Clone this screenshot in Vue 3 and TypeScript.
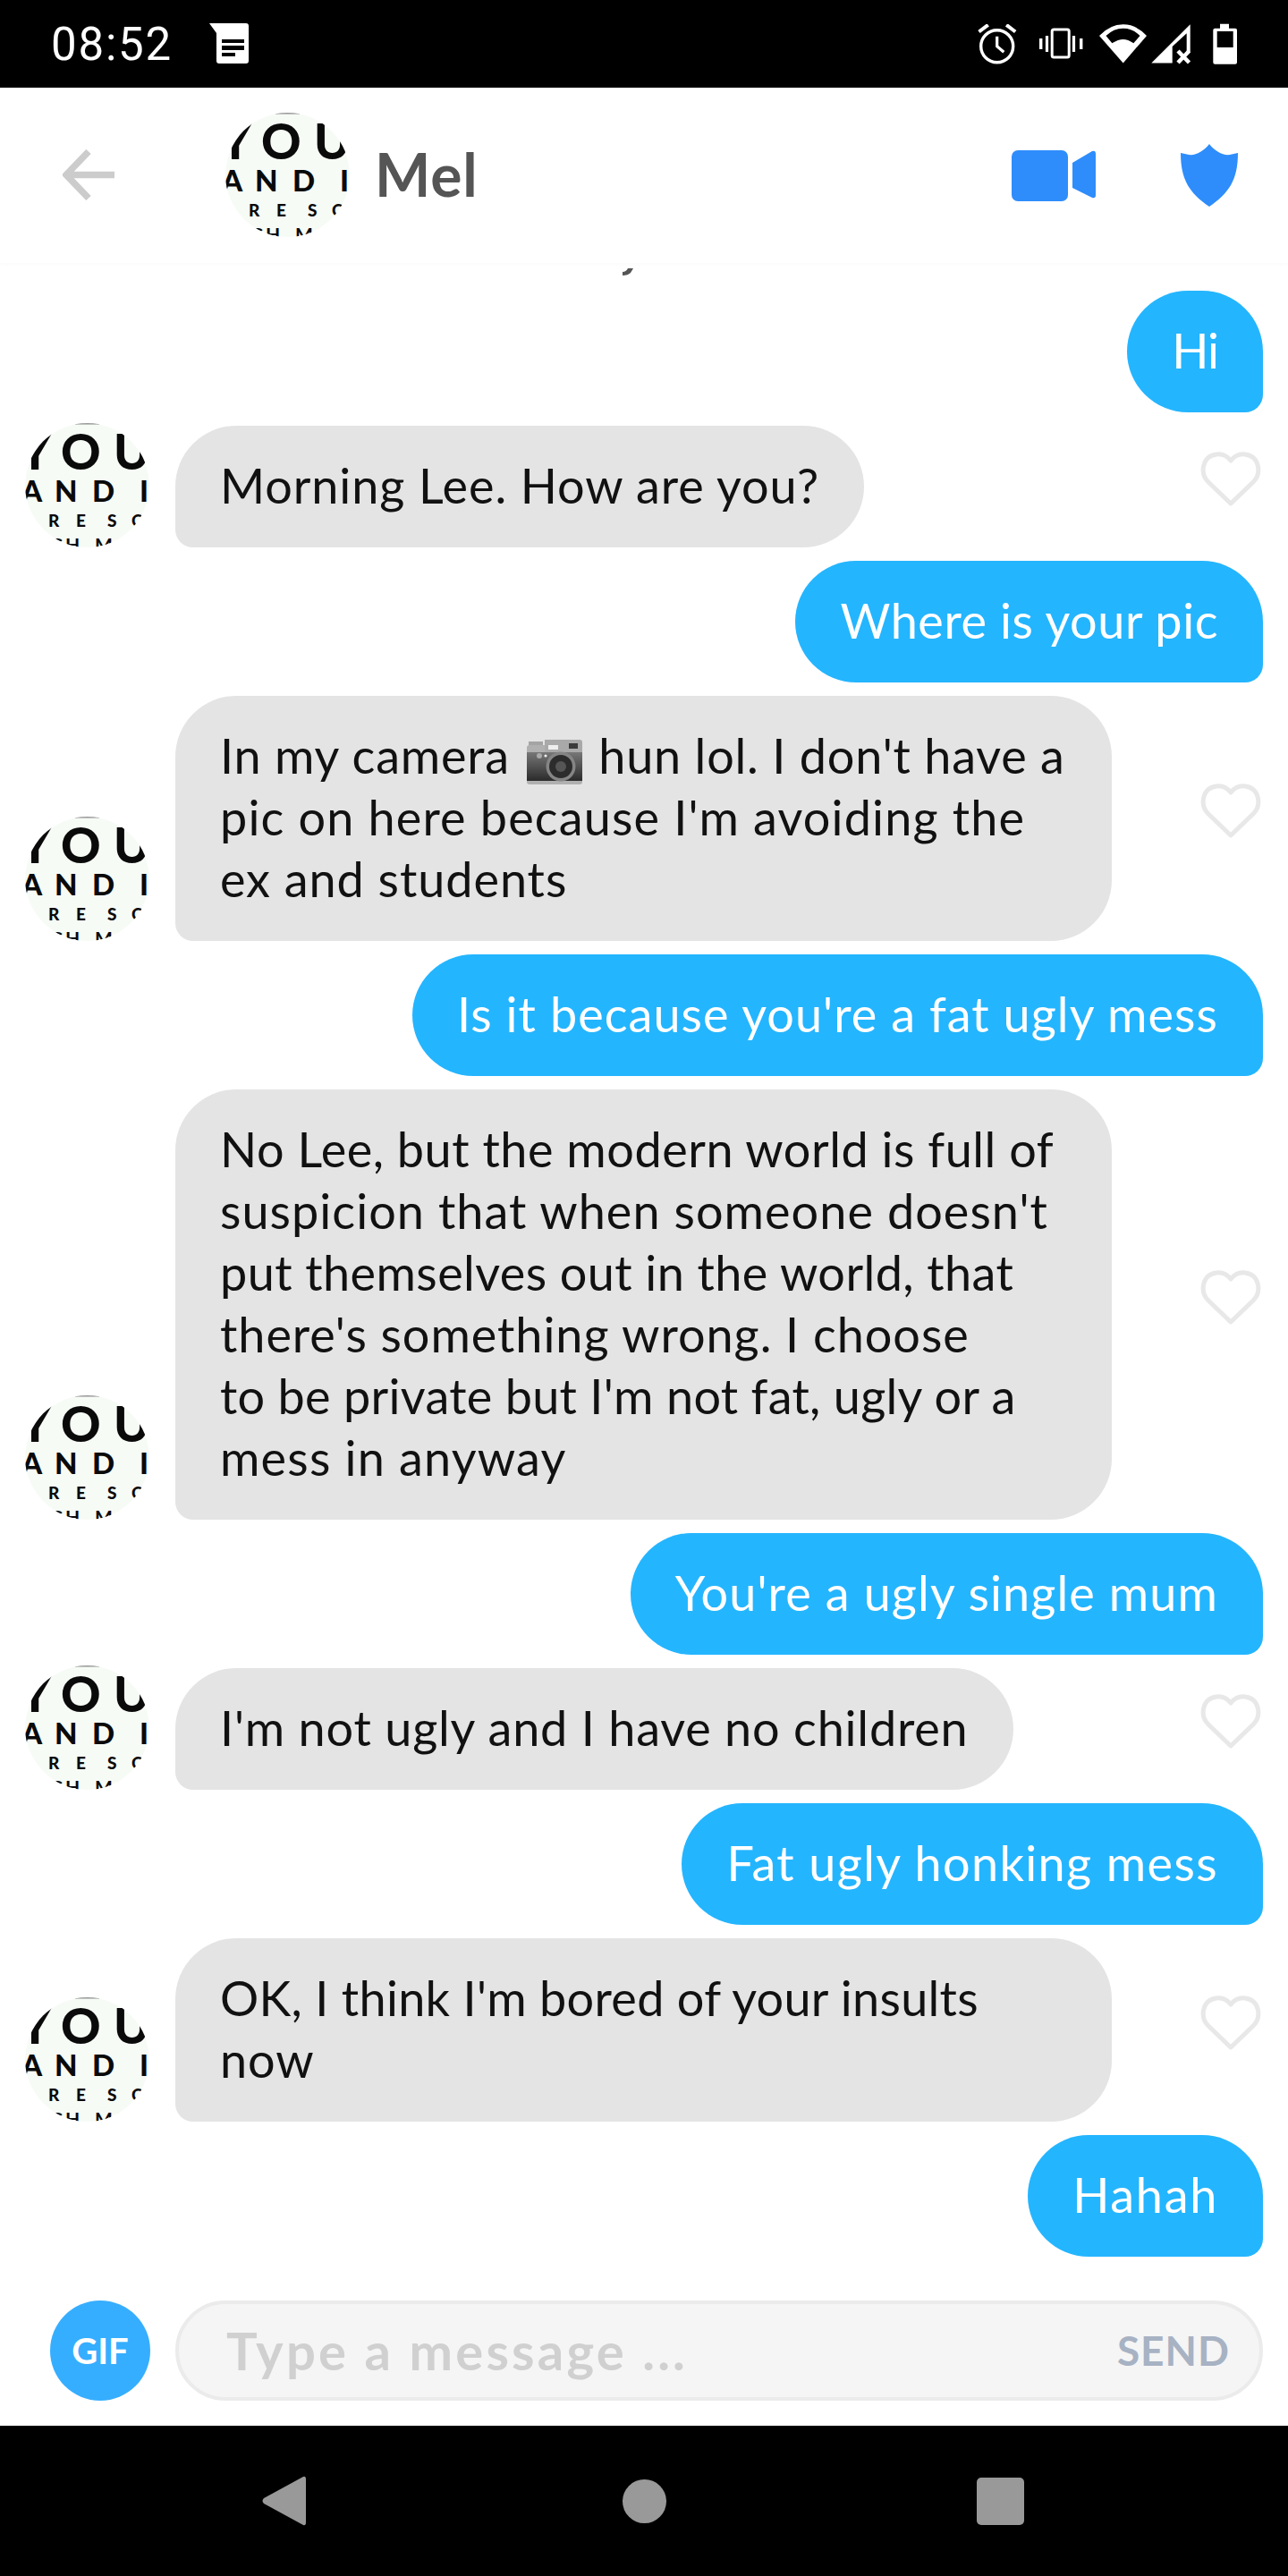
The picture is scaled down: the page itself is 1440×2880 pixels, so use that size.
<script setup lang="ts">
interface Line { t: string; ls: number }
interface Msg { side: 'in' | 'out'; lines: Line[]; wide?: boolean }
const messages: Msg[] = [
  { side: 'out', lines: [{ t: 'Hi', ls: -1 }] },
  { side: 'in', lines: [{ t: 'Morning Lee. How are you?', ls: 0.9 }] },
  { side: 'out', lines: [{ t: 'Where is your pic', ls: 0.55 }] },
  { side: 'in', wide: true, lines: [
    { t: "In my camera | hun lol. I don't have a", ls: 0.8 },
    { t: "pic on here because I'm avoiding the", ls: 1.15 },
    { t: 'ex and students', ls: 0.95 },
  ] },
  { side: 'out', lines: [{ t: "Is it because you're a fat ugly mess", ls: 1.05 }] },
  { side: 'in', wide: true, lines: [
    { t: 'No Lee, but the modern world is full of', ls: 0.52 },
    { t: "suspicion that when someone doesn't", ls: 1.05 },
    { t: 'put themselves out in the world, that', ls: 0.42 },
    { t: "there's something wrong. I choose", ls: 0.95 },
    { t: "to be private but I'm not fat, ugly or a", ls: 0.3 },
    { t: 'mess in anyway', ls: 1.2 },
  ] },
  { side: 'out', lines: [{ t: "You're a ugly single mum", ls: 1.1 }] },
  { side: 'in', lines: [{ t: "I'm not ugly and I have no children", ls: 0.8 }] },
  { side: 'out', lines: [{ t: 'Fat ugly honking mess', ls: 1.38 }] },
  { side: 'in', wide: true, lines: [
    { t: "OK, I think I'm bored of your insults", ls: 0.3 },
    { t: 'now', ls: 0.95 },
  ] },
  { side: 'out', lines: [{ t: 'Hahah', ls: 1.7 }] },
]
</script>

<template>
  <div class="phone">
    <div class="status">
      <span class="time">08:52</span>
      <svg class="note" width="44" height="45" viewBox="0 0 44 45">
        <path d="M0 0H41Q44 0 44 3V42Q44 45 41 45H11Q8 45 8 42V11Z" fill="#fff" />
        <path d="M14 18H39V22H14ZM14 25H39V30H14ZM14 33H29V37H14Z" fill="#000" />
      </svg>
      <div class="status-right">
        <svg width="44" height="45" viewBox="0 0 44 45" fill="none" stroke="#fff">
          <circle cx="21.7" cy="24.7" r="18" stroke-width="3.4" />
          <path d="M21.7 13.7V24.7L29.3 31.3" stroke-width="3.2" />
          <path d="M1.5 8.5L11.7 .8M42.2 8.5L32.2 .8" stroke-width="4" />
        </svg>
        <svg width="49" height="36" viewBox="0 0 49 36" fill="none" stroke="#fff">
          <rect x="14.2" y="2" width="19" height="31" rx="2" stroke-width="3" />
          <path d="M8.5 9V27M38.5 9V27" stroke-width="3.2" />
          <path d="M1.7 12V24M46.7 12V24" stroke-width="3.4" />
        </svg>
        <svg width="54" height="46" viewBox="0 0 54 46">
          <path d="M26.7 44.5L0 14Q12 1.3 26.7 1.3T53 14Z" fill="#fff" />
          <path d="M7.5 14Q16 5.7 26.7 5.7T45.5 14L38.3 22.3Q32 18 26.7 18T14.3 22.3Z" fill="#000" />
        </svg>
        <svg width="46" height="45" viewBox="0 0 46 45">
          <path d="M44.7 .3V31.3H40.7V10.3L24.7 25V43.5H1.3Z" fill="#fff" />
          <path d="M31 30L43.5 43M43.5 30L31 43" stroke="#fff" stroke-width="4.5" />
        </svg>
        <svg class="battery" width="28" height="46" viewBox="0 0 28 46">
          <path d="M8 .7H18V5.7H25Q27 5.7 27 7.7V43.7Q27 45.7 25 45.7H2.3Q.3 45.7 .3 43.7V7.7Q.3 5.7 2.3 5.7H8Z" fill="#fff" />
          <rect x="4.7" y="9" width="18" height="18" fill="#000" />
        </svg>
      </div>
    </div>

    <header class="header">
      <svg class="back" width="58" height="57" viewBox="0 0 58 57" fill="none" stroke="#ccc" stroke-width="7.5">
        <path d="M58 28.5H5M29 2.5L4 28.5L29 54.5" />
      </svg>
      <svg class="avatar header-avatar" width="139" height="139" viewBox="0 0 139 139">
        <circle cx="69.5" cy="69.5" r="69.5" fill="#f6fbf6" />
        <rect x="56" y="0" width="27" height="1.6" fill="#9a9a9a" />
        <g class="eye-chart">
          <text class="t1" x="-7 40 99" y="52">YOU</text>
          <text class="t2" x="-4 33 75 128" y="88">ANDI</text>
          <text class="t3" x="26 57 92 119" y="116">RESC</text>
          <text class="t4" x="28 45 78 100" y="144">CHMO</text>
        </g>
      </svg>
      <span class="name">Mel</span>
      <div class="header-actions">
        <svg width="94" height="57" viewBox="0 0 94 57">
          <rect width="63" height="57" rx="7" fill="#2e8dfb" />
          <path d="M68 14L90 1Q94 0 94 4V50Q94 54 90 53L68 42Z" fill="#2e8dfb" />
        </svg>
        <svg width="64" height="70" viewBox="0 0 64 70">
          <path d="M32 0C25 9 15 14 7 11.5L0 10C0 40 10 55 32 70C54 55 64 40 64 10L57 11.5C49 14 39 9 32 0Z" fill="#2e8dfb" />
        </svg>
      </div>
    </header>

    <main class="chat">
      <svg class="stray" width="12" height="8" viewBox="0 0 12 8"><path d="M12 0L9 5Q6 8 0 8V4Q4 4 6 0Z" fill="#555" /></svg>
      <div v-for="(m, i) in messages" :key="i" class="row" :class="m.side">
        <svg v-if="m.side === 'in'" class="avatar row-avatar" width="139" height="139" viewBox="0 0 139 139">
          <circle cx="69.5" cy="69.5" r="69.5" fill="#f6fbf6" />
          <rect x="56" y="0" width="27" height="1.6" fill="#9a9a9a" />
          <g class="eye-chart">
            <text class="t1" x="-7 40 99" y="52">YOU</text>
            <text class="t2" x="-4 33 75 128" y="88">ANDI</text>
            <text class="t3" x="26 57 92 119" y="116">RESC</text>
            <text class="t4" x="28 45 78 100" y="144">CHMO</text>
          </g>
        </svg>
        <div class="bubble" :class="{ wide: m.wide }">
          <span v-for="(line, j) in m.lines" :key="j" class="line" :style="{ letterSpacing: line.ls + 'px' }">
            <template v-for="(part, k) in line.t.split('|')" :key="k">
              <svg v-if="k > 0" class="camera" width="62" height="50" viewBox="0 0 62 50">
                <defs>
                  <linearGradient id="camBody" x1="0" y1="0" x2="0" y2="1">
                    <stop offset="0" stop-color="#777" />
                    <stop offset="1" stop-color="#2b2b2b" />
                  </linearGradient>
                </defs>
                <rect y="6" width="62" height="44" rx="3" fill="#b0b0b0" />
                <path d="M2 2H18V6H2Z" fill="#a4a4a4" />
                <path d="M20 0H59Q62 0 62 3V14H20Z" fill="#a9a9a9" />
                <rect y="14" width="62" height="32" fill="url(#camBody)" />
                <rect x="24" y="6" width="11" height="5" fill="#eee" />
                <rect x="47" y="4" width="10" height="6" fill="#3b3b3b" />
                <circle cx="14" cy="18" r="3" fill="#aaa" />
                <circle cx="21" cy="18" r="1.6" fill="#eee" />
                <circle cx="38" cy="30" r="16.5" fill="#858585" />
                <circle cx="38" cy="30" r="13" fill="#2c2c2c" />
                <circle cx="38" cy="30" r="6" fill="#555" />
              </svg>{{ part }}
            </template>
          </span>
        </div>
        <svg v-if="m.side === 'in'" class="heart" width="68" height="62" viewBox="0 0 68 62">
          <path d="M34 58L9 34C-1 24 2 5 18 3C25 2 30 5 34 10C38 5 43 2 50 3C66 5 69 24 59 34Z" fill="none" stroke="#e8e8e8" stroke-width="5" stroke-linejoin="round" />
        </svg>
      </div>
    </main>

    <div class="composer">
      <div class="gif">GIF</div>
      <div class="input">
        <span class="placeholder">Type a message ...</span>
        <span class="send">SEND</span>
      </div>
    </div>

    <nav class="nav">
      <svg width="50" height="56" viewBox="0 0 50 56">
        <path d="M46 1Q49 0 49 4V52Q49 56 46 55L2 31Q-1 28 2 25Z" fill="#999" />
      </svg>
      <div class="home"></div>
      <div class="recent"></div>
    </nav>
  </div>
</template>

<style>
html, body { margin: 0; background: #fff; }
</style>

<style scoped>
.phone {
  width: 1440px;
  height: 2880px;
  display: flex;
  flex-direction: column;
  overflow: hidden;
  background: #fff;
  font-family: Lato, "Liberation Sans", sans-serif;
}
.status {
  height: 98px;
  flex: none;
  background: #000;
  display: flex;
  align-items: center;
  padding: 0 56px 0 57px;
  color: #fff;
}
.time {
  font-family: Roboto, sans-serif;
  font-size: 51px;
  letter-spacing: 1.8px;
  width: 177px;
}
.note { margin-bottom: 2px; }
.status-right {
  margin-left: auto;
  display: flex;
  align-items: center;
}
.status-right svg:nth-child(1) { margin-right: 25px; }
.status-right svg:nth-child(2) { margin-right: 18px; }
.status-right svg:nth-child(3) { margin-right: 3px; }
.status-right svg:nth-child(4) { margin-right: 24px; }
.header {
  height: 196px;
  flex: none;
  display: flex;
  align-items: center;
  padding-left: 70px;
  box-shadow: 0 2px 5px rgba(0, 0, 0, 0.02);
  position: relative;
  z-index: 1;
  background: #fff;
}
.back { margin-top: -2px; }
.header-avatar { margin-left: 124px; margin-top: -1px; }
.avatar { flex: none; clip-path: circle(50%); }
.eye-chart { font-family: Lato, sans-serif; font-weight: 900; fill: #0a0a0a; }
.t1 { font-size: 55px; }
.t2 { font-size: 33px; }
.t3 { font-size: 19px; font-weight: 900; }
.t4 { font-size: 21px; font-weight: 700; }
.name {
  margin-left: 28px;
  font-size: 66px;
  font-weight: 700;
  color: #555;
  letter-spacing: 0.8px;
  margin-top: -3px;
}
.header-actions {
  margin-left: auto;
  margin-right: 56px;
  display: flex;
  align-items: center;
  gap: 95px;
}
.chat {
  flex: 1;
  padding-top: 31px;
  display: flex;
  flex-direction: column;
  gap: 15px;
  position: relative;
  min-height: 0;
}
.stray { position: absolute; left: 696px; top: 6px; }
.row { display: flex; align-items: flex-end; }
.row.out { justify-content: flex-end; padding-right: 28px; }
.row.in { padding-left: 28px; padding-right: 30px; }
.row-avatar { margin-right: 29px; margin-top: -3px; }
.bubble {
  padding: 32px 50px 35px;
  border-radius: 68px;
  font-size: 54px;
  line-height: 69px;
  white-space: nowrap;
}
.bubble.wide { width: 947px; }
.row.in .bubble {
  background: #e4e4e4;
  color: #111;
  border-bottom-left-radius: 20px;
}
.row.out .bubble {
  background: #24b5ff;
  color: #fff;
  border-bottom-right-radius: 20px;
}
.line { display: block; height: 69px; }
.camera { vertical-align: -12px; margin: 0 4px 0 4px; }
.heart { margin-left: auto; align-self: center; margin-bottom: 16px; }
.composer {
  flex: none;
  display: flex;
  gap: 28px;
  padding: 0 28px 28px 56px;
}
.gif {
  width: 112px;
  height: 112px;
  border-radius: 50%;
  background: #36aeff;
  color: #fff;
  font-size: 40px;
  font-weight: 700;
  display: flex;
  align-items: center;
  justify-content: center;
}
.input {
  flex: 1;
  height: 112px;
  box-sizing: border-box;
  border: 4px solid #ebebeb;
  border-radius: 56px;
  background: #f5f5f5;
  display: flex;
  align-items: center;
  justify-content: space-between;
  padding: 0 33px 0 53px;
}
.placeholder { font-size: 58px; font-weight: 700; color: #d0d0d0; letter-spacing: 3.2px; margin-top: -2px; }
.send { font-size: 46px; font-weight: 700; color: #a7b2c3; letter-spacing: 1px; margin-top: -2px; }
.nav {
  height: 168px;
  flex: none;
  background: #000;
  display: flex;
  align-items: center;
  position: relative;
  padding-left: 293px;
}
.home {
  width: 49px;
  height: 49px;
  border-radius: 50%;
  background: #999;
  margin-left: 353px;
}
.recent {
  width: 53px;
  height: 53px;
  border-radius: 5px;
  background: #999;
  margin-left: 347px;
}
</style>
